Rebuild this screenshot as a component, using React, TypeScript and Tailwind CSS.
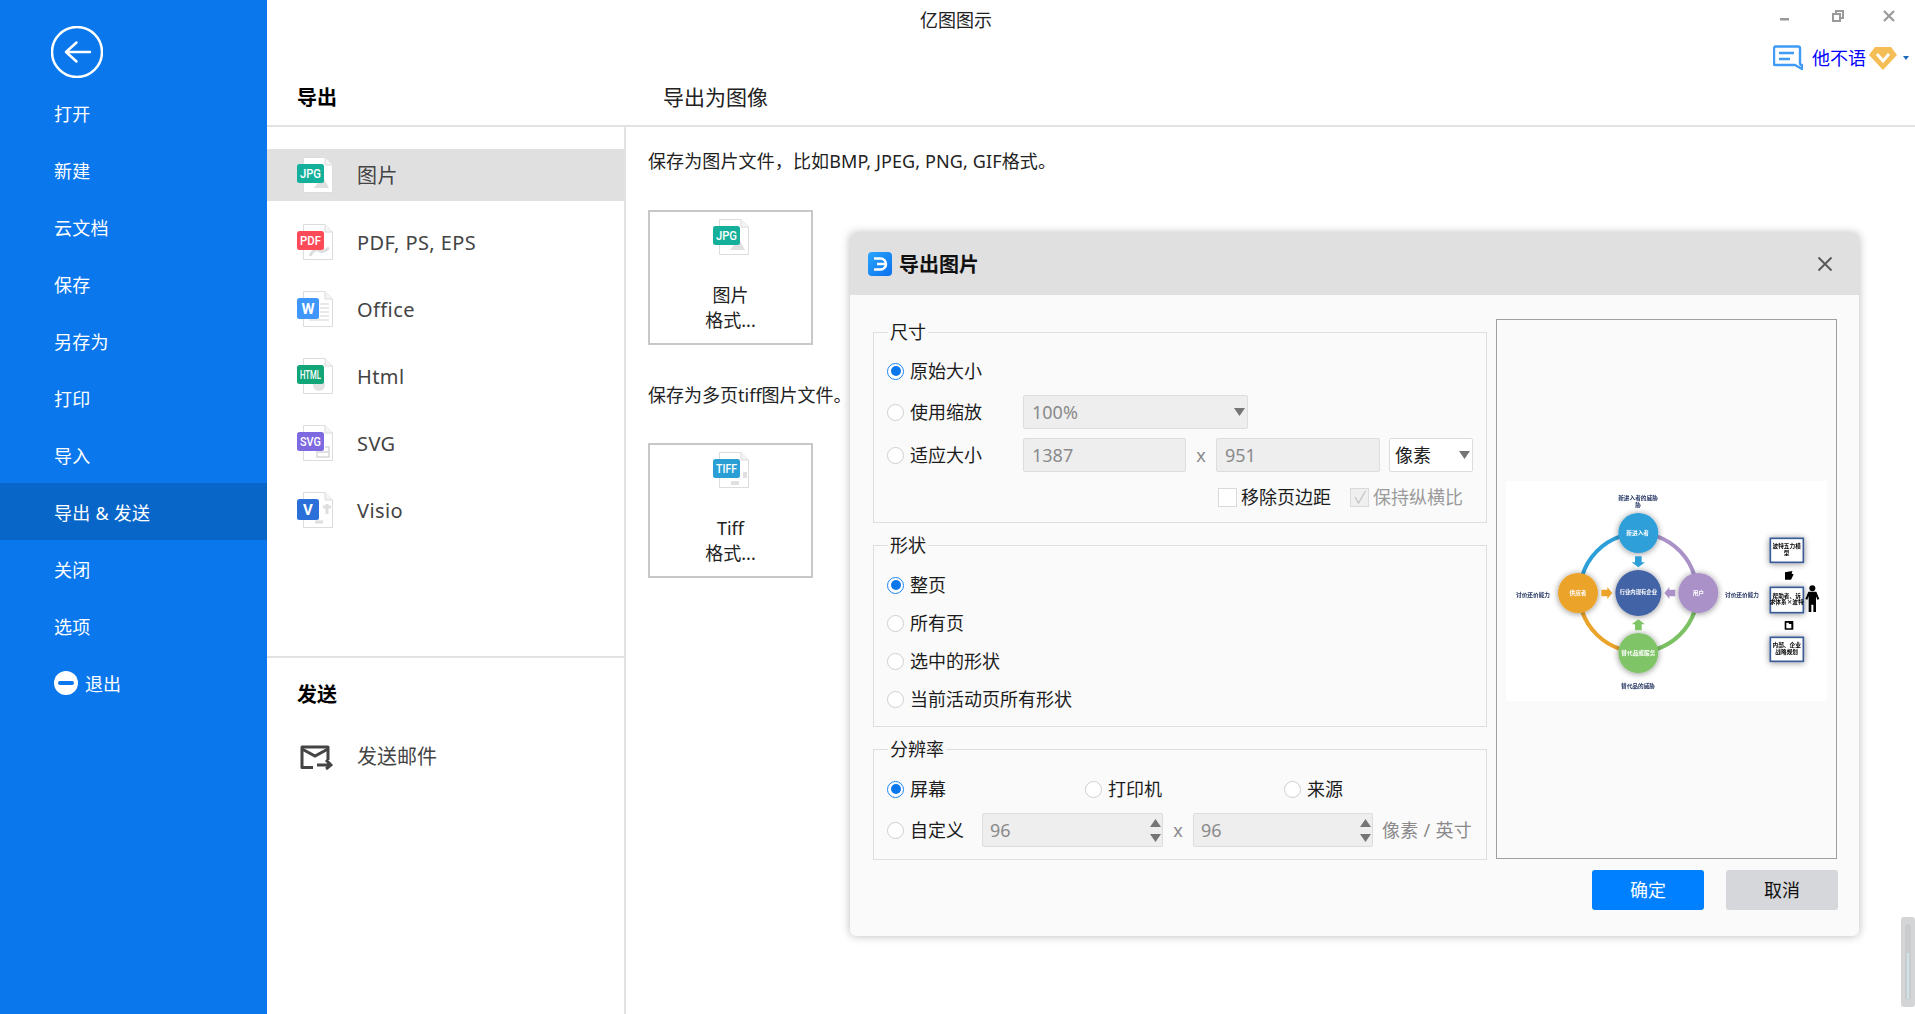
import React from 'react';

const menuItems = ['打开', '新建', '云文档', '保存', '另存为', '打印', '导入', '导出 & 发送', '关闭', '选项'];

interface FileIconProps {
  label: string;
  color: string;
  narrow?: boolean;
  mark?: 'image' | 'pdf' | 'lines' | 'html' | 'svg' | 'visio' | 'tiff';
}

// document outline with the coloured format badge on top
const FileIcon: React.FC<FileIconProps> = ({ label, color, narrow, mark }) => (
  <svg width="36" height="36" viewBox="0 0 36 36" className="shrink-0">
    <path d="M6.5 .5H28L35.5 8V35.5H6.5Z" fill="#fff" stroke="#dcdcdc" />
    <path d="M28 .5V8H35.5" fill="#f4f4f4" stroke="#dcdcdc" />
    {mark === 'image' && <path d="M17 31l6-8 3-3 6 11Z" fill="#e0e0e0" />}
    {mark === 'pdf' && <path d="M13 32c3-7 8-7 10-5s6-1 9-3" fill="none" stroke="#dedede" strokeWidth="3" />}
    {mark === 'lines' && (
      <path d="M23 13h9M23 17h9M23 21h9M23 25h9M12 29h20" stroke="#d4d4d4" strokeWidth="1.2" />
    )}
    {mark === 'html' && <circle cx="22" cy="27" r="6" fill="#e2e2e2" />}
    {mark === 'svg' && <path d="M20 27h12v5H20ZM28 22h4v5h-4" fill="none" stroke="#d8d8d8" strokeWidth="1.5" />}
    {mark === 'visio' && <path d="M30 12v10M26 15h8M18 30h8" stroke="#dedede" strokeWidth="3" />}
    {mark === 'tiff' && <path d="M18 29h8v4h-8ZM30 20h4v6h-4Z" fill="#e0e0e0" />}
    <rect x="0" y="7" width={narrow ? 22 : 27} height={narrow ? 21 : 19} rx="2.5" fill={color} />
    <text
      x={narrow ? 11 : 13.5}
      y={narrow ? 22.5 : 21}
      textAnchor="middle"
      fill="#fff"
      fontSize={narrow ? 15 : 12.5}
      fontWeight={narrow ? 700 : 500}
      fontFamily="Roboto, sans-serif"
      textLength={narrow ? undefined : 21}
      lengthAdjust="spacingAndGlyphs"
    >
      {label}
    </text>
  </svg>
);

const Radio: React.FC<{ label: string; checked?: boolean; className?: string }> = ({ label, checked, className }) => (
  <div className={`flex items-center gap-[6px] shrink-0 ${className ?? ''}`}>
    <span
      className={`w-[17px] h-[17px] rounded-full border bg-white flex items-center justify-center ${
        checked ? 'border-[#1a84f2]' : 'border-[#cfcfcf]'
      }`}
    >
      {checked && <span className="w-[10px] h-[10px] rounded-full bg-[#0a77ec]" />}
    </span>
    <span className="text-[18px] leading-[26px] text-[#1c1c1c]">{label}</span>
  </div>
);

const Caret: React.FC<{ up?: boolean }> = ({ up }) => (
  <svg width="11" height="8" viewBox="0 0 11 8" className="shrink-0">
    <path d={up ? 'M5.5 0L11 8H0Z' : 'M0 0H11L5.5 8Z'} fill="#757575" />
  </svg>
);

const Field: React.FC<{ value: string; className: string }> = ({ value, className }) => (
  <div
    className={`h-[34px] bg-[#eeeeee] border border-[#dddddd] rounded-[2px] flex items-center pl-[8px] text-[18px] text-[#8a8a8a] shrink-0 ${className}`}
  >
    {value}
  </div>
);

const Spin: React.FC<{ value: string; className: string }> = ({ value, className }) => (
  <div
    className={`h-[34px] bg-[#eeeeee] border border-[#dddddd] rounded-[2px] flex items-center justify-between pl-[7px] pr-[1px] text-[18px] text-[#8a8a8a] shrink-0 ${className}`}
  >
    {value}
    <span className="flex flex-col gap-[7px]">
      <Caret up />
      <Caret />
    </span>
  </div>
);

const Group: React.FC<{ title: string; className: string; children: React.ReactNode }> = ({
  title,
  className,
  children,
}) => (
  <fieldset className={`border border-[#dedede] pl-[13px] ${className}`}>
    <legend className="ml-[1px] px-[2px] text-[18px] leading-[26px] text-[#1c1c1c]">{title}</legend>
    {children}
  </fieldset>
);

// thumbnail of the exported drawing, coordinates follow the preview at 3x
const PreviewDiagram: React.FC = () => (
  <svg width="321" height="220" viewBox="47 62 963 660" className="bg-white">
    <defs>
      <filter id="soft" x="-30%" y="-30%" width="160%" height="160%">
        <feDropShadow dx="0" dy="2" stdDeviation="10" floodColor="#000" floodOpacity="0.45" />
      </filter>
      <filter id="blurText">
        <feGaussianBlur stdDeviation="1.2" />
      </filter>
    </defs>
    <g fill="none" strokeWidth="12">
      <path d="M276 345A181 181 0 0 1 390 228" stroke="#2d9fd8" />
      <path d="M500 228A181 181 0 0 1 612 345" stroke="#aa92c9" />
      <path d="M612 455A181 181 0 0 1 500 566" stroke="#7cc163" />
      <path d="M276 455A181 181 0 0 0 390 566" stroke="#eba32a" />
    </g>
    <g filter="url(#soft)">
      <circle cx="444" cy="218" r="60" fill="#2d9fd8" />
      <circle cx="263" cy="398" r="60" fill="#eba32a" />
      <circle cx="624" cy="398" r="60" fill="#aa92c9" />
      <circle cx="444" cy="578" r="60" fill="#7fc466" />
      <circle cx="444" cy="398" r="69" fill="#4264a5" />
    </g>
    <path d="M434 288h20v18h10l-20 15-20-15h10Z" fill="#2d9fd8" />
    <path d="M434 510h20v-18h10l-20-15-20 15h10Z" fill="#7fc466" />
    <path d="M333 388h18v-8l15 18-15 18v-8h-18Z" fill="#eba32a" />
    <path d="M555 388h-18v-8l-15 18 15 18v-8h18Z" fill="#aa92c9" />
    <g filter="url(#soft)">
      <rect x="840" y="234" width="99" height="72" fill="#fff" stroke="#3a5b95" strokeWidth="5" />
      <rect x="840" y="381" width="99" height="76" fill="#fff" stroke="#3a5b95" strokeWidth="5" />
      <rect x="840" y="531" width="99" height="72" fill="#fff" stroke="#3a5b95" strokeWidth="5" />
    </g>
    <path d="M884 336l22-4-2 8 6 2-8 16h-18Z" fill="#000" />
    <rect x="883" y="482" width="26" height="26" rx="2" fill="#000" />
    <path d="M888 487h6l3 4h6v13h-15Z" fill="#fff" />
    <circle cx="966" cy="384" r="9" fill="#000" />
    <path d="M954 394h24l9 22-6 2-4-10v47h-8v-22h-6v22h-8v-47l-4 10-6-2Z" fill="#000" />
    <g filter="url(#blurText)" fontSize="17" fontWeight="700" fontFamily="'Noto Sans CJK SC', sans-serif" textAnchor="middle">
      <g fill="#fff">
        <text x="442" y="224">新进入者</text>
        <text x="263" y="404">供应者</text>
        <text x="624" y="404">用户</text>
        <text x="444" y="584">替代品或服务</text>
        <text x="444" y="402" fontSize="16">行业内现有企业</text>
      </g>
      <g fill="#1c2e5c">
        <text x="443" y="119">新进入者的威胁</text>
        <text x="443" y="141">胁</text>
        <text x="128" y="410">讨价还价能力</text>
        <text x="755" y="410">讨价还价能力</text>
        <text x="443" y="683">替代品的威胁</text>
      </g>
      <g fill="#000">
        <text x="889" y="264">波特五力模</text>
        <text x="889" y="285">型</text>
        <text x="889" y="412">帮助者、诉</text>
        <text x="889" y="432">求体系×波特</text>
        <text x="889" y="560">内部、企业</text>
        <text x="889" y="582">战略规划</text>
      </g>
    </g>
  </svg>
);

const formats: { name: string; icon: FileIconProps }[] = [
  { name: '图片', icon: { label: 'JPG', color: '#14b09c', mark: 'image' } },
  { name: 'PDF, PS, EPS', icon: { label: 'PDF', color: '#fd4a58', mark: 'pdf' } },
  { name: 'Office', icon: { label: 'W', color: '#3f96fb', narrow: true, mark: 'lines' } },
  { name: 'Html', icon: { label: 'HTML', color: '#12a577', mark: 'html' } },
  { name: 'SVG', icon: { label: 'SVG', color: '#7d69e0', mark: 'svg' } },
  { name: 'Visio', icon: { label: 'V', color: '#2b70d8', narrow: true, mark: 'visio' } },
];

const ExportCard: React.FC<{ icon: FileIconProps; title: string }> = ({ icon, title }) => (
  <div className="w-[165px] h-[135px] border-2 border-[#c8c8c8] flex flex-col items-center pt-[7px] text-[18px] leading-[26px] text-[#222]">
    <FileIcon {...icon} />
    <span className="mt-[27px]">{title}</span>
    <span className="-mt-[1px]">格式...</span>
  </div>
);

export default function App() {
  return (
    <div className="relative w-[1915px] h-[1014px] flex overflow-hidden bg-white [font-family:'Noto_Sans','Noto_Sans_CJK_SC',sans-serif]">
      {/* Backstage menu */}
      <aside className="w-[267px] shrink-0 bg-[#0a77ec] text-white">
        <div className="h-[84px] pl-[51px] pt-[26px]">
          <svg width="52" height="52" viewBox="0 0 52 52" fill="none" stroke="#fff">
            <circle cx="26" cy="26" r="25" strokeWidth="2.5" />
            <path d="M39 26H15M25.5 16.5L15 26l10.5 9.5" strokeWidth="2.5" strokeLinecap="round" strokeLinejoin="round" />
          </svg>
        </div>
        {menuItems.map((item) => (
          <div
            key={item}
            className={`h-[57px] pl-[54px] flex items-center text-[18px] ${item === '导出 & 发送' ? 'bg-[#0866c9]' : ''}`}
          >
            <span className="pt-[4px] tracking-[0.25px]">{item}</span>
          </div>
        ))}
        <div className="h-[57px] pl-[54px] flex items-center gap-[7px] text-[18px]">
          <span className="w-6 h-6 rounded-full bg-white flex items-center justify-center">
            <span className="w-4 h-1 rounded-full bg-[#0a77ec]" />
          </span>
          <span className="pt-[4px]">退出</span>
        </div>
      </aside>

      <main className="flex-1 flex flex-col">
        <header className="h-[127px] shrink-0 border-b-2 border-[#e2e2e2] flex flex-col">
          <div className="h-[40px] flex">
            <div className="pl-[653px] pt-[1px] text-[18px] leading-[39px] text-[#222]">亿图图示</div>
            <div className="ml-auto pr-[20px] flex items-start pt-[10px]">
              <svg width="9" height="12" viewBox="0 0 9 12" className="mr-[43px]">
                <rect y="8" width="9" height="2.5" fill="#9a9a9a" />
              </svg>
              <svg width="12" height="12" viewBox="0 0 12 12" fill="none" stroke="#9a9a9a" strokeWidth="2" className="mr-[39px]">
                <rect x="1" y="4" width="7" height="7" />
                <path d="M4 3.5V1h7v7H8.500" />
              </svg>
              <svg width="12" height="12" viewBox="0 0 12 12" fill="none" stroke="#9a9a9a" strokeWidth="2.200">
                <path d="M1 1l10 10M11 1L1 11" />
              </svg>
            </div>
          </div>
          <div className="h-[36px] flex items-center justify-end pr-[6px]">
            <svg width="30" height="26" viewBox="0 0 30 26" fill="none" stroke="#3f9bf5" strokeWidth="2.400" className="mr-[9px]">
              <path d="M2 1.500H25a2 2 0 0 1 2 2V18a2 2 0 0 0 2 2v4L22 20H7L2 20a1 1 0 0 1-1-1V3Z" strokeLinejoin="round" />
              <path d="M6 8H21M6 14H17" />
            </svg>
            <span className="text-[18px] text-[#0000ff] mr-[3px]">他不语</span>
            <svg width="28" height="24" viewBox="0 0 28 24" className="mr-[6px]">
              <path d="M6 1H22L28 9 14 24 0 9Z" fill="#f5bd55" />
              <path d="M8 8L14 15 20 8" fill="none" stroke="#fff" strokeWidth="3" />
            </svg>
            <svg width="6" height="4" viewBox="0 0 6 4">
              <path d="M0 0H6L3 4Z" fill="#1f66bd" />
            </svg>
          </div>
          <div className="flex-1 flex items-start pl-[30px] pt-[8px]">
            <h2 className="w-[366px] text-[20px] leading-[28px] font-bold text-black">导出</h2>
            <span className="text-[21px] leading-[26px] text-[#222]">导出为图像</span>
          </div>
        </header>

        <div className="flex-1 flex">
          {/* Format list */}
          <section className="w-[359px] shrink-0 border-r-2 border-[#e2e2e2] pt-[22px] flex flex-col">
            {formats.map((f, i) => (
              <div
                key={f.name}
                className={`h-[52px] mb-[15px] pl-[30px] flex items-center gap-[24px] text-[20px] text-[#444] ${
                  i === 0 ? 'bg-[#e0e0e0]' : ''
                }`}
              >
                <FileIcon {...f.icon} />
                <span className="pt-[2px] tracking-[0.4px]">{f.name}</span>
              </div>
            ))}
            <div className="mt-[105px] border-t-2 border-[#e2e2e2] pl-[30px] pt-[23px]">
              <h2 className="text-[20px] leading-[28px] font-bold text-black">发送</h2>
              <div className="mt-[33px] flex items-center text-[20px] text-[#444]">
                <svg width="33" height="25" viewBox="0 0 33 25" fill="none" stroke="#444" strokeWidth="3" className="ml-[3px] mr-[24px]">
                  <path d="M28 15V2H2V22.500H13" strokeLinejoin="round" />
                  <path d="M2 4L15 11 28 4" />
                  <path d="M17 20H31M26 15l5 5-5 4" />
                </svg>
                发送邮件
              </div>
            </div>
          </section>

          {/* Format details */}
          <section className="flex-1 pl-[22px] pt-[21px] text-[18px] leading-[26px] text-[#222]">
            <p className="tracking-[0.12px]">保存为图片文件，比如BMP, JPEG, PNG, GIF格式。</p>
            <div className="mt-[36px]">
              <ExportCard icon={{ label: 'JPG', color: '#14b09c', mark: 'image' }} title="图片" />
            </div>
            <p className="mt-[37px]">保存为多页tiff图片文件。</p>
            <div className="mt-[35px]">
              <ExportCard icon={{ label: 'TIFF', color: '#2a9fd6', mark: 'tiff' }} title="Tiff" />
            </div>
          </section>
        </div>
      </main>

      {/* Export dialog */}
      <div className="absolute left-[850px] top-[233px] w-[1009px] h-[703px] bg-[#fafafa] rounded-[6px] overflow-hidden shadow-[0_0_10px_rgba(0,0,0,0.28)] flex flex-col">
        <div className="h-[62px] shrink-0 bg-[#e0e0e0] flex items-center pl-[18px] pr-[26px]">
          <svg width="24" height="24" viewBox="0 0 24 24" className="mr-[7px]">
            <defs>
              <linearGradient id="appIcon" x1="0" y1="0" x2="1" y2="1">
                <stop offset="0" stopColor="#2aa6fb" />
                <stop offset="1" stopColor="#0a6ff0" />
              </linearGradient>
            </defs>
            <rect width="24" height="24" rx="4" fill="url(#appIcon)" />
            <path d="M6 6.500H12.500a5.500 5.500 0 0 1 0 11H6M9 12H17" fill="none" stroke="#fff" strokeWidth="2.500" />
          </svg>
          <span className="pt-[2px] text-[20px] font-bold text-[#111]">导出图片</span>
          <svg width="16" height="16" viewBox="0 0 16 16" stroke="#555" strokeWidth="1.800" className="ml-auto">
            <path d="M1.500 1.500l13 13M14.500 1.500l-13 13" />
          </svg>
        </div>

        <div className="pl-[23px] pt-[24px] flex gap-[9px]">
          <div className="w-[614px] flex flex-col gap-[9px]">
            <Group title="尺寸" className="h-[204px]">
              <div className="pt-[9px] h-[43px] flex items-center">
                <Radio label="原始大小" checked />
              </div>
              <div className="mt-[7px] h-[34px] flex items-center">
                <Radio label="使用缩放" className="w-[136px]" />
                <div className="w-[225px] h-[34px] bg-[#eeeeee] border border-[#dddddd] rounded-[2px] flex items-center justify-between pl-[8px] pr-[2px] text-[18px] text-[#8a8a8a]">
                  100%
                  <Caret />
                </div>
              </div>
              <div className="mt-[9px] h-[34px] flex items-center">
                <Radio label="适应大小" className="w-[136px]" />
                <Field value="1387" className="w-[163px]" />
                <span className="w-[30px] text-center text-[18px] text-[#8a8a8a]">x</span>
                <Field value="951" className="w-[164px]" />
                <div className="ml-[9px] w-[84px] h-[34px] bg-white border border-[#dddddd] rounded-[2px] flex items-center justify-between pl-[5px] pr-[2px] text-[18px] text-[#222]">
                  像素
                  <Caret />
                </div>
              </div>
              <div className="mt-[12px] ml-[331px] h-[26px] flex items-center text-[18px]">
                <span className="w-[19px] h-[19px] bg-white border border-[#dadada] mr-[4px]" />
                <span className="w-[109px] text-[#1c1c1c]">移除页边距</span>
                <span className="w-[19px] h-[19px] bg-[#efefef] border border-[#dadada] mr-[4px] flex items-center justify-center">
                  <svg width="14" height="14" viewBox="0 0 14 14" fill="none" stroke="#c4c4c4" strokeWidth="1.300">
                    <path d="M2 7l3.500 6L12.500 1" />
                  </svg>
                </span>
                <span className="text-[#9a9a9a]">保持纵横比</span>
              </div>
            </Group>

            <Group title="形状" className="h-[195px]">
              <div className="pt-[12px] flex flex-col gap-[8px]">
                {['整页', '所有页', '选中的形状', '当前活动页所有形状'].map((label, i) => (
                  <div key={label} className="h-[30px] flex items-center">
                    <Radio label={label} checked={i === 0} />
                  </div>
                ))}
              </div>
            </Group>

            <Group title="分辨率" className="h-[124px]">
              <div className="mt-[12px] h-[30px] flex items-center">
                <Radio label="屏幕" checked className="w-[198px]" />
                <Radio label="打印机" className="w-[199px]" />
                <Radio label="来源" />
              </div>
              <div className="mt-[9px] h-[34px] flex items-center">
                <Radio label="自定义" className="w-[95px]" />
                <Spin value="96" className="w-[181px]" />
                <span className="w-[30px] text-center text-[18px] text-[#8a8a8a]">x</span>
                <Spin value="96" className="w-[180px]" />
                <span className="ml-[9px] text-[18px] tracking-[0.3px] text-[#8a8a8a] whitespace-nowrap">像素 / 英寸</span>
              </div>
            </Group>
          </div>

          <div className="w-[341px] h-[540px] border border-[#a0a0a0] flex items-center justify-center pt-[3px]">
            <PreviewDiagram />
          </div>
        </div>

        <div className="mt-[10px] pr-[21px] flex justify-end gap-[22px] text-[18px]">
          <button className="w-[112px] h-[40px] rounded-[3px] bg-[#0080ff] text-white">确定</button>
          <button className="w-[112px] h-[40px] rounded-[3px] bg-[#d6d7db] text-[#111]">取消</button>
        </div>
      </div>

      {/* Floating scroll handle at the screen edge */}
      <div className="absolute right-0 top-[917px] w-[14px] h-[90px] rounded-[3px] bg-[#d4d5d7] pl-[4px] pt-[7px]">
        <div className="w-[6px] h-[76px] rounded-[3px] bg-[#cacbcd] flex justify-center pt-[29px]">
          <div className="w-[2px] h-[46px] bg-[#cfe3ea]" />
        </div>
      </div>
    </div>
  );
}
